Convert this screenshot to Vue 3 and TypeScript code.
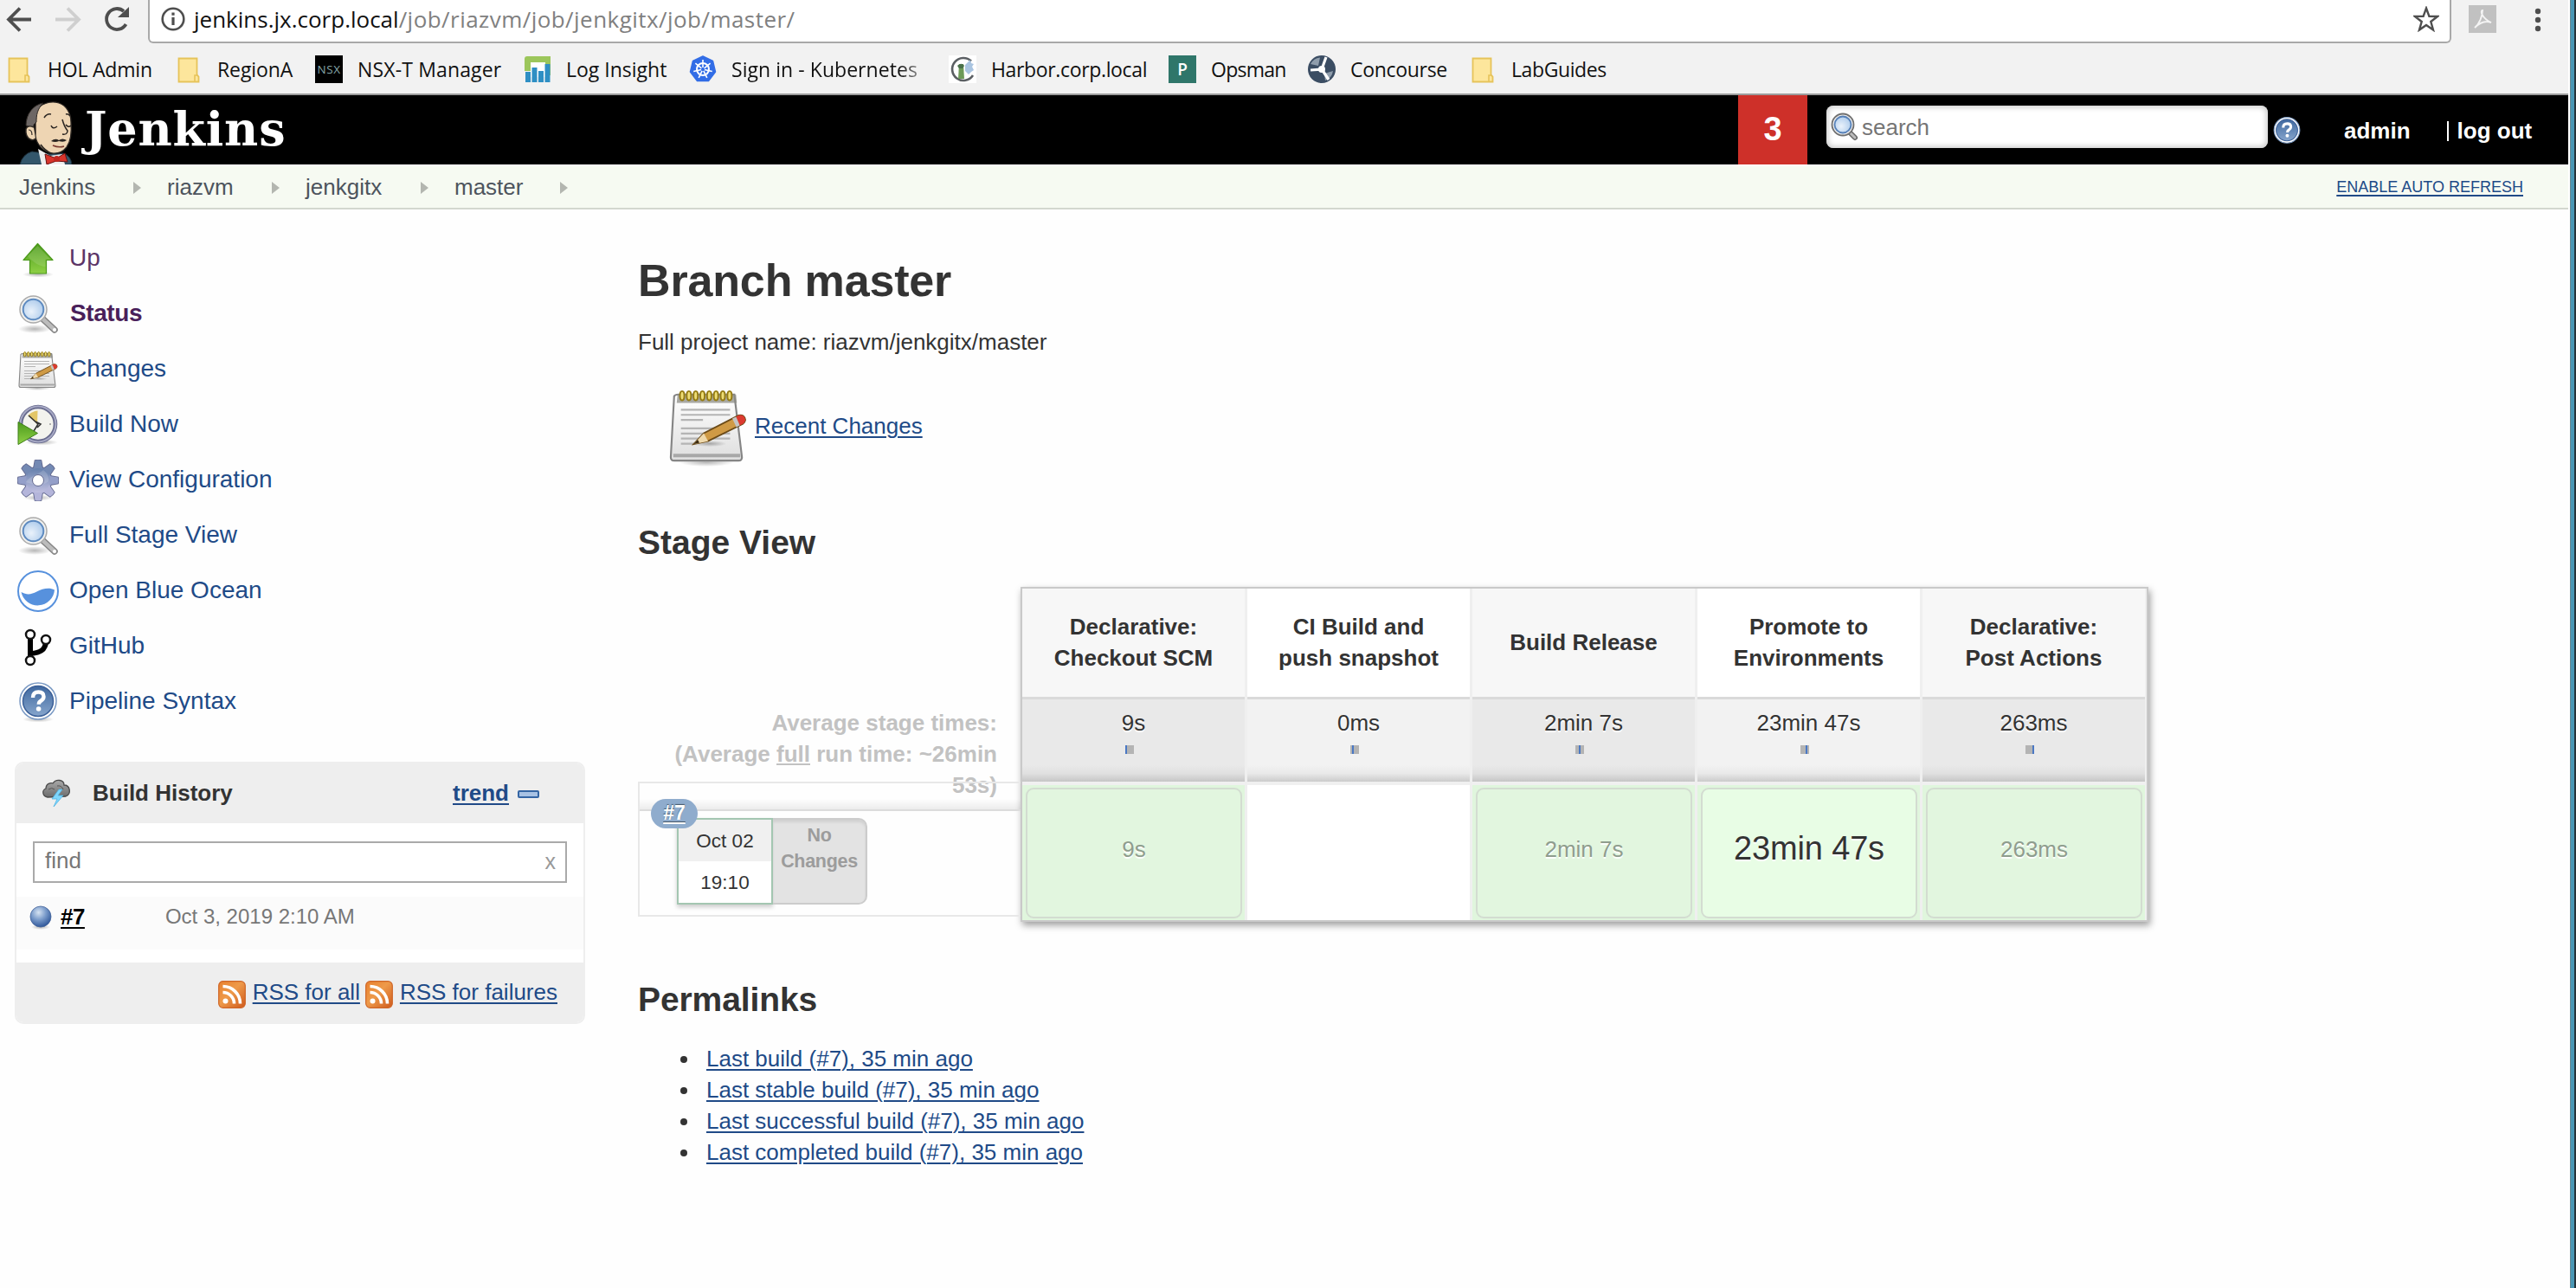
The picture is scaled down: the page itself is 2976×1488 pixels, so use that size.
<script setup lang="ts">
interface Bookmark { label: string; icon: string; width: number; spacing: number; faded?: boolean }
interface Task { label: string; icon: string; kind?: string }
interface Stage { name: string[]; average: string; run: string; slowest?: boolean }

const bookmarks: Bookmark[] = [
  { label: 'HOL Admin', icon: 'folder', width: 122, spacing: -0.2 },
  { label: 'RegionA', icon: 'folder', width: 88, spacing: -0.1 },
  { label: 'NSX-T Manager', icon: 'nsx', width: 167, spacing: 0.15 },
  { label: 'Log Insight', icon: 'insight', width: 117, spacing: 0 },
  { label: 'Sign in - Kubernetes', icon: 'k8s', width: 226, spacing: 0.05, faded: true },
  { label: 'Harbor.corp.local', icon: 'harbor', width: 180, spacing: -0.35 },
  { label: 'Opsman', icon: 'opsman', width: 87, spacing: -0.75 },
  { label: 'Concourse', icon: 'concourse', width: 112, spacing: -0.3 },
  { label: 'LabGuides', icon: 'folder', width: 110, spacing: -0.4 },
]

const crumbs = [
  { label: 'Jenkins', width: 132 },
  { label: 'riazvm', width: 121 },
  { label: 'jenkgitx', width: 133 },
  { label: 'master', width: 122 },
]

const tasks: Task[] = [
  { label: 'Up', icon: 'up', kind: 'visited' },
  { label: 'Status', icon: 'search', kind: 'current' },
  { label: 'Changes', icon: 'notepad' },
  { label: 'Build Now', icon: 'clock' },
  { label: 'View Configuration', icon: 'gear' },
  { label: 'Full Stage View', icon: 'search' },
  { label: 'Open Blue Ocean', icon: 'ocean' },
  { label: 'GitHub', icon: 'fork' },
  { label: 'Pipeline Syntax', icon: 'help' },
]

const stages: Stage[] = [
  { name: ['Declarative:', 'Checkout SCM'], average: '9s', run: '9s' },
  { name: ['CI Build and', 'push snapshot'], average: '0ms', run: '' },
  { name: ['Build Release'], average: '2min 7s', run: '2min 7s' },
  { name: ['Promote to', 'Environments'], average: '23min 47s', run: '23min 47s', slowest: true },
  { name: ['Declarative:', 'Post Actions'], average: '263ms', run: '263ms' },
]

const permalinks = [
  'Last build (#7), 35 min ago',
  'Last stable build (#7), 35 min ago',
  'Last successful build (#7), 35 min ago',
  'Last completed build (#7), 35 min ago',
]

const teeth = [0, 45, 90, 135, 180, 225, 270, 315]
const spokes = [0, 51.4, 102.9, 154.3, 205.7, 257.1, 308.6]
const rings = [0, 1, 2, 3, 4, 5, 6, 7]
</script>

<template>
  <svg class="defs" aria-hidden="true">
    <defs>
      <linearGradient id="gGreen" x1="0" y1="0" x2="0" y2="1"><stop offset="0" stop-color="#4c9a1c" /><stop offset="1" stop-color="#8ed045" /></linearGradient>
      <linearGradient id="gPaper" x1="0" y1="0" x2="0" y2="1"><stop offset="0" stop-color="#fff" /><stop offset="1" stop-color="#dedede" /></linearGradient>
      <linearGradient id="gGear" x1="0" y1="0" x2="0" y2="1"><stop offset="0" stop-color="#6580ac" /><stop offset="1" stop-color="#c0bfe0" /></linearGradient>
      <radialGradient id="gLens" cx=".4" cy=".6" r=".7"><stop offset="0" stop-color="#eaf2fb" /><stop offset="1" stop-color="#a9c8ea" /></radialGradient>
      <radialGradient id="gBall" cx=".4" cy=".3" r=".7"><stop offset="0" stop-color="#d6e3f2" /><stop offset=".5" stop-color="#7b9ccb" /><stop offset="1" stop-color="#31599b" /></radialGradient>
      <linearGradient id="gHelp" x1="0" y1="0" x2="0" y2="1"><stop offset="0" stop-color="#3f689f" /><stop offset="1" stop-color="#86a5cc" /></linearGradient>
      <linearGradient id="gRss" x1="0" y1="0" x2="1" y2="1"><stop offset="0" stop-color="#e8812f" /><stop offset=".45" stop-color="#ee9a4a" /><stop offset="1" stop-color="#cf5a1c" /></linearGradient>
      <linearGradient id="gCloud" x1="0" y1="0" x2="0" y2="1"><stop offset="0" stop-color="#a9a9a9" /><stop offset="1" stop-color="#6c6c6c" /></linearGradient>
      <radialGradient id="gShade"><stop offset="0" stop-color="#000" stop-opacity=".28" /><stop offset="1" stop-color="#000" stop-opacity="0" /></radialGradient>
    </defs>
    <symbol id="i-folder" viewBox="0 0 32 32">
      <path d="M4.500 3.500h21v19l2 2v6h-23z" fill="#fde69c" stroke="#e6c35a" stroke-width="1.800" />
      <path d="M23 30v-7h3.500" fill="none" stroke="#e6c35a" stroke-width="1.600" />
    </symbol>
    <symbol id="i-insight" viewBox="0 0 32 32">
      <path d="M1 31V4q0-3 3-3h27v22h-6V8H8v10H1z" fill="#9cc65b" />
      <rect x="8" y="8" width="17" height="17" fill="#fff" />
      <path d="M2 19h6v12H2zM9.500 14h6v17h-6zM17 18h6v13h-6zM24.500 10h6v21h-6z" fill="#2f8fc4" />
    </symbol>
    <symbol id="i-k8s" viewBox="0 0 32 32">
      <path d="M16 1l11.500 5.500L30.500 19l-8 10.500h-13L1.500 19l3-12.500z" fill="#326de6" stroke="#326de6" stroke-width="1.500" stroke-linejoin="round" />
      <g stroke="#fff" fill="none"><circle cx="16" cy="16" r="7" stroke-width="2" />
        <path v-for="a in spokes" :key="a" d="M16 14V5" stroke-width="1.600" :transform="`rotate(${a} 16 16)`" /></g>
    </symbol>
    <symbol id="i-harbor" viewBox="0 0 32 32">
      <rect width="32" height="32" fill="#fff" />
      <path d="M26 6.500A13 13 0 1 0 28 23" fill="none" stroke="#5b5f63" stroke-width="2.600" />
      <path d="M12 10h5l1 17h-7z" fill="#6d9a58" /><path d="M10 12c3-3 6-3 8 0l-2 3h-4z" fill="#49704a" />
      <path d="M19 11l6-6 1 4 3 1-2 3 2 4-3 2-3 3-4-4z" fill="#a9c4e0" />
    </symbol>
    <symbol id="i-concourse" viewBox="0 0 32 32">
      <circle cx="16" cy="16" r="16" fill="#3b4d63" /><path d="M3 10A14 14 0 0 1 14 2.500L12 12zM29 18a14 14 0 0 1-9 11l-1-8z" fill="#8f9dac" />
      <g stroke="#fff" stroke-width="3.200"><path d="M16 16L21 2M16 16L3 17M16 16l8 12" /></g><circle cx="16" cy="16" r="4" fill="#fff" />
    </symbol>
    <symbol id="i-up" viewBox="0 0 48 48">
      <ellipse cx="24" cy="42" rx="18" ry="3.500" fill="url(#gShade)" />
      <path d="M23.500 6.500L41 25.500h-7.500V41h-19V25.500H7z" fill="url(#gGreen)" stroke="#4c9a1c" stroke-width="1.200" stroke-linejoin="round" />
      <path d="M23.500 9L38 24.500h-5.500V33C26 33 18 28 12 21z" fill="#fff" opacity=".13" />
    </symbol>
    <symbol id="i-search" viewBox="0 0 48 48">
      <ellipse cx="20" cy="41" rx="19" ry="5" fill="url(#gShade)" />
      <path d="M29 29l14 13" stroke="#858585" stroke-width="7.500" stroke-linecap="round" /><path d="M29 29l14 13" stroke="#bcbcbc" stroke-width="4.500" stroke-linecap="round" />
      <circle cx="43" cy="42" r="2" fill="#fff" />
      <circle cx="18.500" cy="18.500" r="15.500" fill="#f1f1ef" stroke="#aaa" stroke-width="1.500" />
      <circle cx="18.500" cy="18.500" r="11.800" fill="url(#gLens)" stroke="#5d8ac0" stroke-width="2" />
    </symbol>
    <symbol id="i-zoom" viewBox="0 0 34 34">
      <path d="M22 22l7 7" stroke="#666" stroke-width="6" stroke-linecap="round" /><path d="M22 22l7 7" stroke="#bbb" stroke-width="3" stroke-linecap="round" />
      <circle cx="15" cy="14" r="12.500" fill="#ececec" stroke="#6f6f6f" stroke-width="1.800" />
      <circle cx="15" cy="14" r="9.500" fill="url(#gLens)" stroke="#5580b8" stroke-width="1.800" />
    </symbol>
    <symbol id="i-notepad" viewBox="0 0 48 48">
      <ellipse cx="23" cy="45.500" rx="16" ry="2.500" fill="url(#gShade)" />
      <path d="M6.500 5.500h33l4.500 37q0 2-2 2H4q-2 0-2-2l2-36q.5-1 2.500-1z" fill="url(#gPaper)" stroke="#858585" stroke-width="1.100" />
      <path d="M6 5.500h34.500l.5 5H5.500z" fill="#8c8c86" opacity=".75" />
      <path d="M3.500 41.500h39.500" stroke="#a8a8a8" stroke-width="2" />
      <path d="M8 14.500h29M8 17.500h29M8 20.500h13M8 25.500h29M8 28.500h29M8 31.500h29M8 34.500h8" stroke="#b4b4b4" stroke-width="1.100" />
      <ellipse v-for="n in rings" :key="n" :cx="8.700 + n * 4" cy="6.200" rx="1.300" ry="2.700" fill="#eddd76" stroke="#957b12" stroke-width="1" />
      <ellipse cx="25" cy="34.500" rx="10" ry="1.800" fill="url(#gShade)" />
      <path d="M15.500 34.800l6-6.500L42 17.800q3.500-.8 4 2.700-.2 1.500-1.500 2.400L24 33z" fill="#cf9a45" stroke="#6b4a17" stroke-width=".9" />
      <path d="M15.500 34.800l6-6.500 2.500 4.700z" fill="#efd9ac" /><path d="M15.500 34.800l2.400-2.600 1 1.800z" fill="#3a2a12" />
      <path d="M40.500 18.600l1.500-.8q3.500-.8 4 2.700-.2 1.500-1.500 2.400L42.700 23.800z" fill="#dc3a30" /><path d="M38.300 19.700l2.200-1.100 2.200 5.200-2 1z" fill="#c4c4c4" />
    </symbol>
    <symbol id="i-clock" viewBox="0 0 48 48">
      <ellipse cx="28" cy="44" rx="19" ry="3.500" fill="url(#gShade)" />
      <circle cx="24" cy="23" r="20" fill="#f3f3ee" stroke="#66698c" stroke-width="4.600" /><circle cx="24" cy="23" r="20.400" fill="none" stroke="#a6a8c4" stroke-width="2" />
      <path d="M23 23L12.500 13Q17 8 23.500 7.500z" fill="#e3c667" /><path d="M13 13l11 10-5 8M21 20l6 3-4 4" fill="none" stroke="#333" stroke-width="1.600" />
      <circle cx="38" cy="23" r="1" fill="#999" />
      <path d="M1 20.500l22.500 13L1 46.500z" fill="url(#gGreen)" stroke="#3f8018" stroke-width="1" />
    </symbol>
    <symbol id="i-gear" viewBox="0 0 48 48">
      <ellipse cx="24" cy="44" rx="17" ry="3.500" fill="url(#gShade)" />
      <path v-for="a in teeth" :key="a" d="M18.500 12l2-11q3.500-1 7 0l2 11z" fill="none" stroke="#62688f" stroke-width="1.600" :transform="`rotate(${a} 24 24)`" />
      <circle cx="24" cy="24" r="16" fill="url(#gGear)" stroke="#62688f" stroke-width="1" />
      <path v-for="a in teeth" :key="'f' + a" d="M18.500 13l2-12q3.500-1 7 0l2 12z" :fill="a < 80 || a > 280 ? '#7389b3' : a === 90 || a === 270 ? '#949fc9' : '#b4b5da'" :transform="`rotate(${a} 24 24)`" />
      <circle cx="24" cy="24" r="14" fill="url(#gGear)" />
      <path d="M10 26c5-8 14-8 20-14 4 3 7 8 6 13-6 6-18 4-26 1z" fill="#fff" opacity=".16" />
      <circle cx="24" cy="24" r="6.500" fill="#fff" stroke="#62688f" stroke-width="1" />
    </symbol>
    <symbol id="i-ocean" viewBox="0 0 48 48">
      <circle cx="24" cy="24" r="23" fill="#fff" stroke="#5791dd" stroke-width="2" />
      <path d="M4.500 25c7 4 12 2.500 18-.5s14-5.500 20.500-2A19.500 19.500 0 0 1 4.500 25z" fill="#5791dd" />
    </symbol>
    <symbol id="i-fork" viewBox="0 0 48 48">
      <path d="M15 11v28M33 17c0 12-8 14-17 15" fill="none" stroke="#000" stroke-width="6" />
      <g fill="#fff" stroke="#111" stroke-width="2.500"><circle cx="15" cy="10" r="5" /><circle cx="33" cy="16" r="5" /><circle cx="15" cy="40" r="5" /></g>
    </symbol>
    <symbol id="i-help" viewBox="0 0 48 48">
      <ellipse cx="24" cy="44" rx="18" ry="3.500" fill="url(#gShade)" />
      <circle cx="24" cy="23" r="21" fill="#fff" stroke="#7b9ac4" stroke-width="1.500" /><circle cx="24" cy="23" r="17.500" fill="url(#gHelp)" stroke="#3d6199" stroke-width="1.500" />
      <path d="M18 19q0-6.500 6.500-6.500 6 0 6 5.300 0 3-3 4.700-2.700 1.500-2.700 4.300" fill="none" stroke="#fff" stroke-width="4.400" /><circle cx="24.600" cy="32" r="2.800" fill="#fff" />
    </symbol>
    <symbol id="i-rss" viewBox="0 0 32 32">
      <rect x=".7" y=".7" width="30.600" height="30.600" rx="5" fill="url(#gRss)" stroke="#cf6526" stroke-width="1.200" />
      <circle cx="8.500" cy="23.500" r="3" fill="#fff" /><path d="M5.500 13.500a13 13 0 0 1 13 13M5.500 6.500a20 20 0 0 1 20 20" fill="none" stroke="#fff" stroke-width="3.600" />
    </symbol>
  </svg>

  <div class="screen">
    <div class="page">
      <div class="toolbar">
        <div class="nav">
          <svg viewBox="0 0 150 46" width="150" height="46" fill="none" stroke-width="3.800">
            <path d="M36 22.500H11M23 9.500L10 22.500l13 13" stroke="#4e4e4e" />
            <path d="M64 22.500h26M78 9.500l13 13-13 13" stroke="#cfcfcf" />
            <path d="M145.500 28A12 12 0 1 1 143 13" stroke="#4e4e4e" /><path d="M149 8v12h-13z" fill="#4e4e4e" />
          </svg>
        </div>
        <div class="address">
          <svg class="info" viewBox="0 0 28 28" width="28" height="28"><circle cx="14" cy="14" r="12.300" fill="none" stroke="#4e4e4e" stroke-width="2.600" /><path d="M14 12v9M14 6.500v3.300" stroke="#4e4e4e" stroke-width="3.200" /></svg>
          <span class="host">jenkins.jx.corp.local</span><span class="path">/job/riazvm/job/jenkgitx/job/master/</span>
          <svg class="star" viewBox="0 0 30 30" width="30" height="30"><path d="M15 2.500l3.400 9.300 9.600.2-7.700 6 2.700 9.500-8-5.600-8 5.600 2.700-9.500L2 12l9.600-.2z" fill="none" stroke="#4e4e4e" stroke-width="2.400" /></svg>
        </div>
        <svg class="pdf" viewBox="0 0 32 32" width="32" height="32"><rect width="32" height="32" fill="#c1c1c1" /><path d="M7 26c5-4 9-13 9-20-3 0-1 9 10 14-5-2-12-1-19 6z" fill="none" stroke="#f4f4f4" stroke-width="1.900" /></svg>
        <svg class="menu" viewBox="0 0 8 28" width="8" height="28" fill="#4e4e4e"><circle cx="4" cy="4" r="3.200" /><circle cx="4" cy="14" r="3.200" /><circle cx="4" cy="24" r="3.200" /></svg>
      </div>

      <div class="bookmarks">
        <div v-for="b in bookmarks" :key="b.label" class="bookmark">
          <span v-if="b.icon === 'nsx'" class="tile nsx">NSX</span>
          <span v-else-if="b.icon === 'opsman'" class="tile opsman">P</span>
          <svg v-else width="32" height="32"><use :href="`#i-${b.icon}`" /></svg>
          <span class="label" :class="{ faded: b.faded }" :style="{ width: b.width + 'px', letterSpacing: b.spacing + 'px' }">{{ b.label }}</span>
        </div>
      </div>

      <header class="header">
        <svg class="butler" viewBox="0 0 66 76" width="66" height="76">
          <path d="M1 76q3-12 14-15l20 3 16-1q9 3 10 13z" fill="#33566b" stroke="#1b2d38" stroke-width="1" />
          <path d="M22 58l14 8 14-2 3 12H26z" fill="#eee" />
          <path d="M19 15C24 6 36 2 46 5c9 3 14 12 14 22 1 12 0 22-5 29-4 5-10 8-17 7-9-1-18-10-19-20z" fill="#eed5b3" stroke="#2b2622" stroke-width="1.300" />
          <path d="M8 31C8 18 16 7 28 5c-7 7-8 14-8 22l-3 3v8l-4-5z" fill="#6d6765" stroke="#2b2622" />
          <path d="M17 33q-7-3-9 2-1 9 5 12 4 2 6-1" fill="#eed5b3" stroke="#2b2622" stroke-width="1.500" /><path d="M11 36q4 0 4 6" fill="none" stroke="#2b2622" stroke-width="1.200" />
          <path d="M29 22q3-5 8-4M54 18q3-1 5 2M37 31q2 5 7 1M54 30q3 4 6 1M50 24q2 8 6 13 0 5-6 4M25 53q5 7 12 10" fill="none" stroke="#2b2622" stroke-width="1.500" />
          <path d="M37 49q5-4 9-1 4-3 9 0-3 3-9 1-4 2-9 0z" fill="#2b2622" /><path d="M39 54q7 3 13 1" fill="none" stroke="#7a3a30" stroke-width="1.600" />
          <path d="M30 64l13 5 10-6 3 10-13-1-11 4z" fill="#d8342b" stroke="#611" stroke-width="1" /><circle cx="43.500" cy="69.500" r="3.500" fill="#c12720" />
        </svg>
        <span class="brand">Jenkins</span>
        <span class="alerts">3</span>
        <div class="searchbox"><svg width="34" height="34"><use href="#i-zoom" /></svg><span>search</span></div>
        <svg class="help" width="34" height="34"><use href="#i-help" /></svg>
        <span class="user">admin</span>
        <span class="logout"><i></i>log out</span>
      </header>

      <nav class="crumbs">
        <span v-for="c in crumbs" :key="c.label" class="crumb">
          <span :style="{ width: c.width + 'px' }">{{ c.label }}</span><i></i>
        </span>
        <a class="refresh">ENABLE AUTO REFRESH</a>
      </nav>

      <div class="body">
        <aside class="side">
          <a v-for="t in tasks" :key="t.label" class="task" :class="t.kind">
            <svg width="48" height="48"><use :href="`#i-${t.icon}`" /></svg><span>{{ t.label }}</span>
          </a>
          <section class="history">
            <div class="hist-head">
              <svg viewBox="0 0 34 34" width="34" height="34">
                <path d="M7 22C1 21 0 14 5 12 5 6 11 5 13 6c4-6 13-4 13 2 7 0 9 10 2 13z" fill="url(#gCloud)" stroke="#4a4a4a" stroke-width="1.300" />
                <path d="M8 13q4-3 7 0M18 9q5-1 7 4" fill="none" stroke="#555" stroke-width="1" />
                <path d="M20 13l-8 11h6l-4 9 11-13h-6l5-7z" fill="#7fd6fb" stroke="#4fb4e4" stroke-width=".8" />
              </svg>
              <b>Build History</b><a>trend</a><i></i>
            </div>
            <div class="find"><span>find</span><span class="clear">x</span></div>
            <div class="build">
              <svg viewBox="0 0 26 28" width="26" height="28"><ellipse cx="13" cy="25" rx="11" ry="3" fill="url(#gShade)" /><circle cx="13" cy="13" r="12" fill="url(#gBall)" stroke="#45659a" stroke-width=".8" /></svg>
              <a>#7</a><span>Oct 3, 2019 2:10 AM</span>
            </div>
            <div class="feeds">
              <svg width="32" height="32"><use href="#i-rss" /></svg><a>RSS for all</a>
              <svg width="32" height="32"><use href="#i-rss" /></svg><a>RSS for failures</a>
            </div>
          </section>
        </aside>

        <main class="main">
          <h1>Branch master</h1>
          <p>Full project name: riazvm/jenkgitx/master</p>
          <div class="recent"><svg width="94" height="94"><use href="#i-notepad" /></svg><a>Recent Changes</a></div>
          <h2>Stage View</h2>

          <div class="stage-view">
            <div class="runs">
              <div class="average">Average stage times:<br />(Average <u>full</u> run time: ~26min<br />53s)</div>
              <div class="run">
                <div class="run-top"></div>
                <span class="badge">#7</span>
                <div class="run-info">
                  <div class="when"><div class="date">Oct 02</div><div class="time">19:10</div></div>
                  <div class="nochange">No<br />Changes</div>
                </div>
              </div>
            </div>
            <div class="stages">
              <div v-for="(s, i) in stages" :key="i" class="stage" :class="{ odd: i % 2 === 0 }">
                <div class="name"><span v-for="line in s.name" :key="line">{{ line }}</span></div>
                <div class="avg">
                  <span>{{ s.average }}</span>
                  <div class="mark"><i v-for="n in 5" :key="n" :class="{ on: n === i + 1 }"></i></div>
                </div>
                <div class="cell" :class="{ filled: s.run, slowest: s.slowest }"><div v-if="s.run" class="result">{{ s.run }}</div></div>
              </div>
            </div>
          </div>

          <h2 class="perma">Permalinks</h2>
          <ul><li v-for="p in permalinks" :key="p"><a>{{ p }}</a></li></ul>
        </main>
      </div>
    </div>
    <div class="edge"></div>
  </div>
</template>

<style>
body { margin: 0; background: #fff; }
</style>

<style scoped>
.defs { position: absolute; width: 0; height: 0; }
.screen { display: flex; width: 2976px; height: 1488px; overflow: hidden; font-family: "Liberation Sans", Arial, sans-serif; font-size: 26px; line-height: 36px; color: #333; background: #fefefe; }
.page { width: 2967px; flex: none; }
.edge { flex: none; width: 9px; background: linear-gradient(90deg, #fff 0 2px, #6b8791 2px 3px, #4a97b5 3px 7px, #26333a 7px); }
.screen svg { flex: none; display: block; }
a { color: #204a87; text-decoration: underline; text-decoration-thickness: 2px; text-underline-offset: 3px; }

.toolbar { display: flex; align-items: flex-start; height: 51px; background: #f2f2f2; }
.nav { width: 171px; flex: none; }
.address { display: flex; align-items: center; box-sizing: border-box; width: 2661px; height: 50px; padding: 0 12px 5px 13px; background: #fff; border: 2px solid #a9a9a9; border-top: 0; border-radius: 0 0 6px 6px; font-family: "Open Sans", "Noto Sans", sans-serif; white-space: nowrap; }
.info { margin-right: 10px; }
.host { color: #111; }
.path { color: #808080; letter-spacing: .45px; }
.star { margin-left: auto; }
.pdf { margin: 6px 44px 0 20px; }
.menu { margin-top: 9px; }

.bookmarks { display: flex; gap: 25px; align-items: center; box-sizing: border-box; height: 59px; padding: 1px 6px 0; background: #f2f2f2; border-bottom: 2px solid #9c9c9c; font-family: "Open Sans", "Noto Sans", sans-serif; font-size: 23px; color: #111; }
.bookmark { display: flex; align-items: center; gap: 17px; }
.label { display: block; white-space: nowrap; overflow: hidden; }
.faded { -webkit-mask-image: linear-gradient(90deg, #000 86%, rgba(0, 0, 0, .2) 100%); mask-image: linear-gradient(90deg, #000 86%, rgba(0, 0, 0, .2) 100%); }
.tile { display: block; width: 32px; height: 32px; line-height: 32px; text-align: center; }
.nsx { background: #000; color: #86a7a9; font-size: 13.500px; letter-spacing: .5px; }
.opsman { background: #2f766a; color: #fff; font-size: 19px; font-weight: 600; }

.header { display: flex; align-items: center; height: 80px; background: #000; color: #fff; font-weight: 700; }
.butler { margin: 4px 0 0 22px; }
.brand { width: 1910px; margin: -2px 0 0 10px; font: 700 54px/78px "DejaVu Serif", serif; letter-spacing: .8px; }
.alerts { width: 80px; height: 80px; line-height: 79px; text-align: center; font-size: 38px; background: #ce3029; }
.searchbox { display: flex; align-items: center; box-sizing: border-box; width: 510px; height: 49px; margin: -7px 0 0 22px; padding-left: 4px; gap: 3px; background: #fff; border-radius: 8px; box-shadow: inset 0 0 6px 2px #ccc; color: #757575; font-weight: 400; }
.searchbox span { line-height: 49px; padding-top: 1px; }
.help { margin: 2px 0 0 5px; }
.user { margin: 2px 0 0 49px; }
.logout { display: flex; align-items: center; margin: 2px 0 0 42px; white-space: nowrap; }
.logout i { width: 2px; height: 23px; margin-right: 10px; background: #fff; }

.crumbs { display: flex; align-items: center; box-sizing: border-box; height: 52px; padding: 0 52px 1px 22px; background: #f6faf2; border-top: 2px solid #fff; border-bottom: 2px solid #d3d7cf; color: #4d545d; }
.crumb { display: flex; align-items: center; flex: none; white-space: nowrap; margin-right: 30px; }
.crumb i { width: 0; height: 0; margin-top: 2px; border: solid transparent; border-width: 7px 0 7px 9px; border-left-color: #b3b6b0; }
.refresh { margin-left: auto; font-size: 18px; }

.body { display: flex; }
.side { box-sizing: border-box; width: 737px; flex: none; padding: 25px 0 0 17px; }
.task { display: flex; align-items: center; height: 64px; padding-left: 3px; gap: 13px; font-size: 28px; text-decoration: none; }
.task span { margin: -2px 0 0 -1px; }
.task.visited { color: #5c3566; }
.task.current { color: #4a1f5a; font-weight: 700; letter-spacing: -.4px; }
.task.current span { padding-left: 1px; }

.history { box-sizing: border-box; width: 659px; height: 303px; margin-top: 37px; border: 2px solid #eee; border-radius: 10px; background: #fff; overflow: hidden; }
.hist-head { display: flex; align-items: center; height: 67px; padding: 0 0 2px 29px; background: #eee; }
.hist-head b { width: 416px; margin-left: 25px; }
.hist-head a { font-weight: 700; }
.hist-head i { box-sizing: border-box; width: 25px; height: 9px; margin: 4px 0 0 10px; border: 2px solid #3465a4; border-radius: 2px; background: #a8c2e4; }
.find { display: flex; justify-content: space-between; box-sizing: border-box; width: 617px; height: 48px; margin: 21px 0 0 19px; padding: 0 11px 0 12px; border: 2px solid #aaa; line-height: 41px; color: #777; }
.find .clear { font-size: 25px; line-height: 43px; color: #999; }
.build { display: flex; align-items: center; box-sizing: border-box; height: 61px; margin-top: 16px; padding: 0 0 14px 15px; background: #fbfbfb; }
.build a { margin: -2px 0 0 10px; color: #000; font-weight: 700; letter-spacing: -.5px; }
.build span { margin: -2px 0 0 93px; font-size: 24px; color: #777; }
.feeds { display: flex; align-items: center; justify-content: flex-end; height: 71px; margin-top: 15px; padding-right: 30px; background: #eee; }
.feeds a { margin-top: -3px; }
.feeds svg { margin: 2px 8px 0 6px; }

.main { padding-top: 52px; }
h1, h2, p, ul { margin: 0; padding: 0; }
h1 { font-size: 52px; line-height: 60px; letter-spacing: -.15px; }
p { margin-top: 23px; }
.recent { display: flex; align-items: center; gap: 7px; height: 96px; margin: 31px 0 0 34px; }
h2 { margin-top: 62px; font-size: 39px; line-height: 50px; }

.stage-view { display: flex; margin-top: 26px; height: 387px; }
.runs { width: 442px; flex: none; box-sizing: border-box; padding-top: 139px; }
.average { padding-right: 27px; text-align: right; font-weight: 700; color: #c2c2c2; line-height: 36px; white-space: nowrap; }
.run { position: relative; box-sizing: border-box; height: 156px; margin-top: -22px; border: 2px solid #e8e8e8; border-right: 0; }
.run-top { height: 30px; border-bottom: 2px solid #dcdcdc; background: linear-gradient(180deg, rgba(0, 0, 0, 0) 60%, rgba(0, 0, 0, .07)); }
.badge { position: absolute; left: 13px; top: 18px; width: 54px; height: 34px; border-radius: 17px; background: #8faccd; color: #fff; font-size: 23px; font-weight: 700; line-height: 33px; text-align: center; text-decoration: underline; text-decoration-thickness: 2px; text-underline-offset: 3px; text-shadow: 0 -1px 1px #456; }
.run-info { display: flex; margin: 8px 0 0 43px; font-size: 22.500px; }
.when { box-sizing: border-box; width: 111px; height: 100px; border: 2px solid #a3c6b1; background: #fff; text-align: center; box-shadow: 0 3px 5px rgba(0, 0, 0, .2); }
.date { height: 48px; line-height: 49px; background: #f0f0f0; }
.time { line-height: 49px; }
.nochange { box-sizing: border-box; width: 109px; height: 100px; padding-top: 3px; border: 2px solid #ccc; border-left: 0; border-radius: 0 10px 10px 0; background: #e3e3e3; box-shadow: inset 0 3px 3px rgba(0, 0, 0, .08); color: #9c9c9c; font-size: 21.500px; font-weight: 700; letter-spacing: -.3px; line-height: 30px; text-align: center; }

.stages { display: flex; box-sizing: border-box; width: 1303px; border: 2px solid #c9c9c9; box-shadow: 2px 4px 8px rgba(0, 0, 0, .38); background: #fff; }
.stage { box-sizing: border-box; width: 260px; border-right: 3px solid #efefef; text-align: center; }
.stage:last-child { border-right-width: 2px; width: 259px; }
.name { display: flex; flex-direction: column; justify-content: center; box-sizing: border-box; height: 125px; padding-bottom: 1px; font-weight: 700; }
.avg { box-sizing: border-box; height: 98px; padding-top: 9px; border-top: 3px solid #dadada; background: linear-gradient(180deg, #f2f2f2 80%, #e9e9e9 90%, #cbcbcb); text-shadow: 0 2px 1px #fff; }
.odd .name { background: #f7f7f7; }
.odd .avg { background: linear-gradient(180deg, #e9e9e9 80%, #e0e0e0 90%, #c6c6c6); }
.avg span { display: block; }
.mark { display: flex; justify-content: center; height: 10px; margin: 8px 9px 0 0; }
.mark i { width: 2px; background: #b4b4b4; }
.mark i.on { background: #4a78c4; }
.cell { box-sizing: border-box; height: 160px; padding: 3px 3px 3px 4px; border-top: 4px solid #f0f0f0; }
.filled { background: #e0f6dd; }
.result { box-sizing: border-box; height: 151px; border: 2px solid #d3dcd1; border-radius: 9px; background: #e2f6df; color: #8f9d8e; line-height: 139px; text-shadow: 0 2px 1px #fff; }
.slowest .result { background: #e8fde5; color: #333; font-size: 38px; letter-spacing: -.15px; line-height: 137px; }

.perma { margin-top: 65px; letter-spacing: -.1px; }
ul { margin: 25px 0 0 80px; list-style: none; }
li { display: flex; align-items: center; height: 36px; }
li::before { content: ''; width: 8px; height: 8px; margin: 2px 22px 0 -31px; border-radius: 50%; background: #333; }
</style>
